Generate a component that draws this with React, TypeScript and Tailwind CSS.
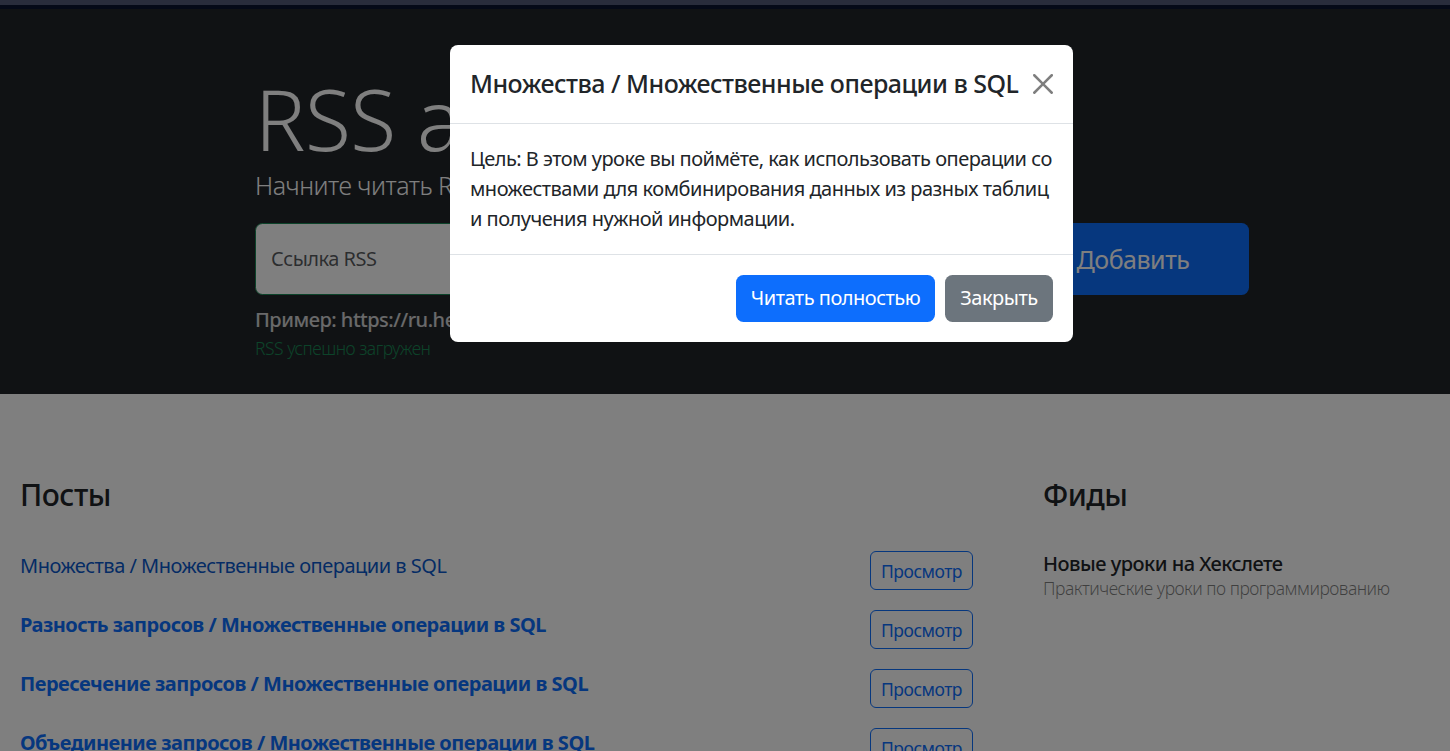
const posts = [
  { title: 'Множества / Множественные операции в SQL', read: true },
  { title: 'Разность запросов / Множественные операции в SQL', read: false },
  { title: 'Пересечение запросов / Множественные операции в SQL', read: false },
  { title: 'Объединение запросов / Множественные операции в SQL', read: false },
  { title: 'Подзапросы / Множественные операции в SQL', read: false },
];

function CloseIcon() {
  return (
    <svg viewBox="0 0 16 16" className="h-[20px] w-[20px]" fill="#000">
      <path d="M.293.293a1 1 0 0 1 1.414 0L8 6.586 14.293.293a1 1 0 1 1 1.414 1.414L9.414 8l6.293 6.293a1 1 0 0 1-1.414 1.414L8 9.414l-6.293 6.293a1 1 0 0 1-1.414-1.414L6.586 8 .293 1.707a1 1 0 0 1 0-1.414z" />
    </svg>
  );
}

export default function App() {
  return (
    <div className="relative h-[751px] overflow-hidden bg-white font-['Noto_Sans',sans-serif] text-[20px] leading-[1.5] tracking-[-0.025em] text-[#212529]">
      <div className="h-[5px] bg-[#535b79]" />
      <div className="h-[4px] bg-[#0a1430]" />

      {/* hero */}
      <section className="bg-[#212529] pb-[59px] pl-[255px] pr-[201px] pt-[60px] text-white">
        <h1 className="text-[84px] font-light leading-[1.2]">RSS агрегатор</h1>
        <p className="-mt-[3px] mb-[19px] text-[25px] font-light">Начните читать RSS сегодня! Это легко, это красиво.</p>
        <form className="flex gap-[30px]">
          <div className="relative flex-1">
            <input
              type="text"
              className="h-[72px] w-full rounded-[7.5px] border border-[#198754] bg-white px-[15px] outline-none"
            />
            <label className="pointer-events-none absolute left-[16px] top-[21px] text-[20px] text-[#212529]/75">Ссылка RSS</label>
          </div>
          <button type="button" className="h-[72px] w-[232px] rounded-[7.5px] bg-[#0d6efd] text-[25px] text-white">
            Добавить
          </button>
        </form>
        <div className="relative">
          <p className="mt-[10px] font-medium text-white/80">Пример: https://ru.hexlet.io/lessons.rss</p>
          <p className="absolute left-0 top-full text-[17.5px] font-light text-[#198754]">RSS успешно загружен</p>
        </div>
      </section>

      {/* content */}
      <section className="flex pt-[83px]">
        <div className="w-[993px]">
          <h2 className="mb-[28px] px-[20px] text-[30px] font-medium leading-[1.2]">Посты</h2>
          <ul>
            {posts.map((p) => (
              <li key={p.title} className="flex items-start justify-between px-[20px] py-[10px]">
                <a
                  href="#"
                  className={p.read ? 'font-normal text-[#0a58ca]' : 'font-bold text-[#0d6efd]'}
                >
                  {p.title}
                </a>
                <button
                  type="button"
                  className="h-[39px] w-[103px] rounded-[6px] border border-[#0d6efd] text-[17.5px] text-[#0d6efd]"
                >
                  Просмотр
                </button>
              </li>
            ))}
          </ul>
        </div>
        <div className="ml-[30px] flex-1">
          <h2 className="mb-[26px] px-[20px] text-[30px] font-medium leading-[1.2]">Фиды</h2>
          <ul>
            <li className="px-[20px] py-[10px]">
              <h3 className="font-medium">Новые уроки на Хекслете</h3>
              <p className="-mt-[4px] text-[17.5px] font-light text-black/50">Практические уроки по программированию</p>
            </li>
          </ul>
        </div>
      </section>

      {/* backdrop */}
      <div className="fixed inset-0 bg-black/50" />

      {/* modal */}
      <div className="absolute left-[450px] top-[45px] w-[623px] rounded-[8px] bg-white">
        <div className="flex items-center justify-between border-b border-[#dee2e6] p-[20px]">
          <h5 className="whitespace-nowrap text-[25px] font-medium leading-[1.5]">Множества / Множественные операции в SQL</h5>
          <button type="button" className="-my-[10px] -mr-[5px] p-[5px] opacity-50">
            <CloseIcon />
          </button>
        </div>
        <div className="p-[20px]">
          Цель: В этом уроке вы поймёте, как использовать операции со
          <br />
          множествами для комбинирования данных из разных таблиц
          <br />
          и получения нужной информации.
        </div>
        <div className="flex justify-end gap-[10px] border-t border-[#dee2e6] px-[20px] py-[20px]">
          <button type="button" className="h-[47px] w-[199px] rounded-[7.5px] bg-[#0d6efd] text-white">
            Читать полностью
          </button>
          <button type="button" className="h-[47px] w-[108px] rounded-[7.5px] bg-[#6c757d] text-white">
            Закрыть
          </button>
        </div>
      </div>
    </div>
  );
}
